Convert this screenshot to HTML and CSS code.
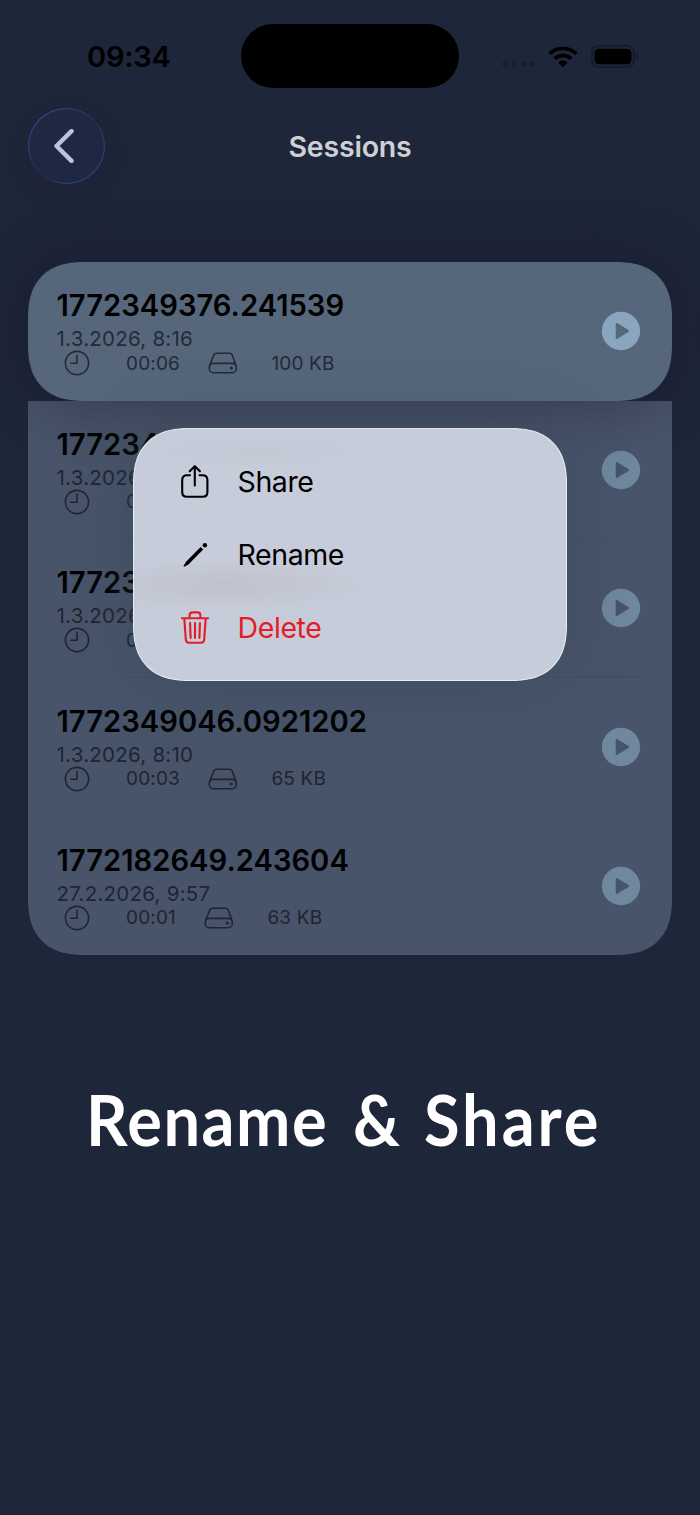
FILE: index.html
```html
<!DOCTYPE html>
<html lang="en">
<head>
<meta charset="utf-8">
<title>Sessions</title>
<link rel="stylesheet" href="styles.css">
</head>
<body>
<svg class="symbols" aria-hidden="true">
  <symbol id="clock" viewBox="0 0 26 26"><circle cx="13" cy="13" r="11.6"/><path d="M13 5.4V13.2H6.8"/></symbol>
  <symbol id="drive" viewBox="0 0 30 22"><path d="M1.600 13.500 5.700 3.200Q6.600 1.300 8.800 1.300H21.200Q23.400 1.300 24.300 3.200L28 13.500"/><rect x="1.300" y="11.400" width="27" height="9.300" rx="4"/><circle class="dot" cx="23.300" cy="16" r="1.600"/></symbol>
  <symbol id="play" viewBox="0 0 40 40"><path fill-rule="evenodd" d="M20 .8a19.200 19.200 0 1 1 0 38.400a19.200 19.200 0 1 1 0-38.400ZM14.700 13.200V26.800Q14.800 28.500 16.400 27.700L27.500 21.100Q28.900 20 27.500 18.900L16.400 12.300Q14.800 11.500 14.700 13.200Z"/></symbol>
</svg>
<div class="screen">
  <div class="status">
    <span class="time">09:34</span>
    <span class="island"></span>
    <div class="indicators">
      <svg class="cell" viewBox="0 0 34 6"><circle cx="3" cy="3" r="3"/><circle cx="12.200" cy="3" r="3"/><circle cx="21.400" cy="3" r="3"/><circle cx="30.700" cy="3" r="3"/></svg>
      <svg class="wifi" viewBox="0 0 30 22"><path d="M15 .4C20.600 .4 25.600 2.500 29.200 6Q29.600 6.400 29.200 6.900L27.400 8.700Q27 9.100 26.500 8.700C23.400 5.800 19.400 4.300 15 4.300S6.600 5.800 3.500 8.700Q3 9.100 2.600 8.700L.8 6.900Q.4 6.400 .8 6C4.400 2.500 9.400 .4 15 .4ZM15 7.500C18.600 7.500 21.700 8.800 24.100 10.900Q24.600 11.400 24.100 11.900L22.200 13.700Q21.800 14.100 21.300 13.700C19.600 12.200 17.400 11.300 15 11.300S10.400 12.200 8.700 13.700Q8.200 14.100 7.800 13.700L5.900 11.900Q5.400 11.400 5.900 10.900C8.300 8.800 11.400 7.500 15 7.500ZM15 14.500C16.600 14.500 18 15 19.100 15.900Q19.600 16.400 19.100 16.900L15.500 20.900Q15 21.400 14.500 20.900L10.900 16.900Q10.400 16.400 10.900 15.900C12 15 13.400 14.500 15 14.500Z"/></svg>
      <svg class="battery" viewBox="0 0 48 24"><rect class="shell" x="1" y="1" width="42" height="21" rx="6.500"/><rect x="3.500" y="3.800" width="37" height="15.400" rx="4.500"/><path class="cap" d="M45 8.500Q47.200 9.300 47.200 11.500T45 14.500Z"/></svg>
    </div>
  </div>
  <header class="nav">
    <button class="back" aria-label="Back"><svg viewBox="0 0 20 34"><path d="M17.500 2.200 2.500 17 17.500 31.800"/></svg></button>
    <h1 class="nav-title">Sessions</h1>
  </header>

  <main class="list">
    <article class="row lifted">
      <div class="info"><h2>1772349376.241539</h2><p class="date">1.3.2026, 8:16</p>
        <div class="meta"><svg class="clock"><use href="#clock"/></svg><span>00:06</span><svg class="drive"><use href="#drive"/></svg><span>100 KB</span></div></div>
      <svg class="play"><use href="#play"/></svg>
    </article>
    <div class="rest">
      <article class="row">
        <div class="info"><h2>177234</h2><p class="date">1.3.2026</p>
          <div class="meta"><svg class="clock"><use href="#clock"/></svg><span>0</span></div></div>
        <svg class="play"><use href="#play"/></svg>
      </article>
      <article class="row">
        <div class="info"><h2>17723</h2><p class="date">1.3.2026</p>
          <div class="meta"><svg class="clock"><use href="#clock"/></svg><span>0</span></div></div>
        <svg class="play"><use href="#play"/></svg>
      </article>
      <article class="row">
        <div class="info"><h2>1772349046.0921202</h2><p class="date">1.3.2026, 8:10</p>
          <div class="meta"><svg class="clock"><use href="#clock"/></svg><span>00:03</span><svg class="drive"><use href="#drive"/></svg><span>65 KB</span></div></div>
        <svg class="play"><use href="#play"/></svg>
      </article>
      <article class="row">
        <div class="info"><h2>1772182649.243604</h2><p class="date">27.2.2026, 9:57</p>
          <div class="meta"><svg class="clock"><use href="#clock"/></svg><span>00:01</span><svg class="drive"><use href="#drive"/></svg><span>63 KB</span></div></div>
        <svg class="play"><use href="#play"/></svg>
      </article>
    </div>
    <div class="menu">
      <div class="item"><svg viewBox="0 0 30 36"><path d="M10 11.300H7Q2.200 11.300 2.200 16V28Q2.200 32.800 7 32.800H22.600Q27.400 32.800 27.400 28V16Q27.400 11.300 22.600 11.300H19.600M14.800 21.500V2.500M9.700 7.300 14.800 2.200 19.900 7.300"/></svg><span>Share</span></div>
      <div class="item"><svg viewBox="0 0 30 36"><path class="solid" d="M20.700 10.100 23.200 12.600 8.400 27.400 4.200 29.800Q3.300 30 3.600 29.100L6 24.700Z"/><circle class="solid" cx="24.900" cy="8.300" r="2.200"/></svg><span>Rename</span></div>
      <div class="item danger"><svg viewBox="0 0 30 36"><path d="M1.900 8.200H28.100M9.600 8V5.200Q9.600 2.400 12.400 2.400H17.600Q20.400 2.400 20.400 5.200V8M4.300 8.400 5.800 29.500Q6 32.700 9.200 32.700H20.800Q24 32.700 24.200 29.500L25.700 8.400M10.100 13 10.600 28M15 13V28M19.900 13 19.400 28"/></svg><span>Delete</span></div>
    </div>
  </main>
  <p class="caption"><span class="word">Rename</span> <span class="word amp">&amp;</span> <span class="word last">Share</span></p>
</div>
</body>
</html>
```
FILE: styles.css
```css
* { box-sizing: border-box; margin: 0; padding: 0; }
body { background: #1e263a; font-family: Inter, "Liberation Sans", sans-serif; color: #000; }
.symbols { position: absolute; width: 0; height: 0; }
.screen { width: 700px; height: 1515px; overflow: hidden; }
svg { display: block; flex: none; }

.status { display: grid; grid-template-columns: 241px 218px 241px; height: 88px; padding-top: 24px; }
.time { padding-left: 87px; line-height: 66px; font-size: 29px; font-weight: 560; letter-spacing: -.2px; }
.island { height: 64px; border-radius: 32px; background: #000; }
.indicators { display: flex; padding-left: 43px; }
.cell { width: 34px; height: 6px; margin-top: 37px; fill: #191f31; }
.wifi { width: 30px; height: 22px; margin: 22px 0 0 12px; }
.battery { width: 48px; height: 24px; margin: 21px 0 0 13px; }
.shell { fill: none; stroke: #151a29; stroke-width: 1.600; }
.cap { fill: #151a29; }

.nav { display: grid; grid-template-columns: 77px 1fr 77px; padding: 20px 28px 0; height: 174px; align-items: start; }
.back { width: 77px; height: 76px; border-radius: 50%; border: 1.500px solid transparent; display: grid; place-items: center; padding-right: 6px;
  background: linear-gradient(#1f2842, #1f2842) padding-box, conic-gradient(from 0deg, #2f4b88, #25325a 45deg, #2a3f73 80deg, #304d8a 140deg, #2f4b88 180deg, #222e52 225deg, #2a3f73 260deg, #345395 315deg, #2f4b88) border-box;
  box-shadow: 0 8px 24px rgba(30, 30, 48, .3); }
.back svg { width: 20px; height: 34px; fill: none; stroke: #b9c6d7; stroke-width: 4.500; stroke-linecap: round; stroke-linejoin: round; }
.nav-title { text-align: center; font-size: 28.500px; font-weight: 600; line-height: 78px; letter-spacing: -.2px; color: #cfcfd4; }

.list { position: relative; margin: 0 28px; }
.row { height: 138.670px; display: flex; padding: 27px 31px 0 28.500px; justify-content: space-between; position: relative; }
.row h2 { font-size: 29.200px; font-weight: 590; line-height: 34px; color: #000; white-space: nowrap; }
.date { font-size: 20.500px; line-height: 24px; margin-top: 4px; letter-spacing: .25px; color: #232a36; }
.meta { display: flex; align-items: center; height: 24px; padding-left: 7px; font-size: 19px; letter-spacing: .15px; color: #232a36; white-space: nowrap; }
.clock { width: 26px; height: 26px; margin-right: 36.500px; }
.drive { width: 30px; height: 22px; margin: 0 33.500px 0 28px; }
.clock, .drive { fill: none; stroke: currentColor; stroke-width: 1.600; stroke-linecap: round; stroke-linejoin: round; }
.dot { fill: currentColor; stroke: none; }
.play { width: 40px; height: 40px; margin-top: 22px; fill: #6f889e; }
.lifted { z-index: 1; background: #56677b; border-radius: 50px; box-shadow: 0 0 60px rgba(20, 12, 28, .4); }
.lifted .play { fill: #8aa6be; }
.rest { background: #48546a; border-radius: 0 0 50px 50px; height: 554.330px; }
.rest .date, .rest .meta { color: #1f2530; }
.rest .row:not(:last-child)::after { content: ""; position: absolute; left: 98px; right: 28px; bottom: 0; height: 1.500px; background: #445162; }

.menu { position: absolute; z-index: 2; left: 104.500px; top: 166px; width: 434.500px; height: 253px; padding: 16px 0 0 46px; border-radius: 50px; border: 1.500px solid #e3edf4; border-top-color: #dfe4ee;
  background:
    radial-gradient(closest-side, rgba(190, 190, 200, .28), transparent) 6px 4px / 240px 36px no-repeat,
    radial-gradient(closest-side, rgba(190, 188, 196, .65), transparent) -60px 130px / 300px 52px no-repeat,
    #c6ccda;
  box-shadow: 0 0 64px rgba(50, 66, 80, .45); }
.item { display: flex; align-items: center; height: 73px; font-size: 28.500px; letter-spacing: -.4px; gap: 28px; }
.item svg { width: 30px; height: 36px; fill: none; stroke: currentColor; stroke-width: 2.100; stroke-linecap: round; stroke-linejoin: round; }
.item .solid { fill: currentColor; stroke: none; }
.danger { color: #e51c26; }

.caption { margin-top: 120px; padding-left: 86px; display: flex; font: 700 71px/88px Lato, sans-serif; color: #fff; letter-spacing: 1.700px; }
.word { flex: none; width: 267px; transform: scaleX(.915); transform-origin: 0 50%; }
.amp { width: 70.500px; }
.last { letter-spacing: 3.200px; }

@supports (corner-shape: squircle) {
  .lifted, .menu { border-radius: 57px; corner-shape: superellipse(1.300); }
  .rest { border-radius: 0 0 57px 57px; corner-shape: superellipse(1.300); }
}
```
